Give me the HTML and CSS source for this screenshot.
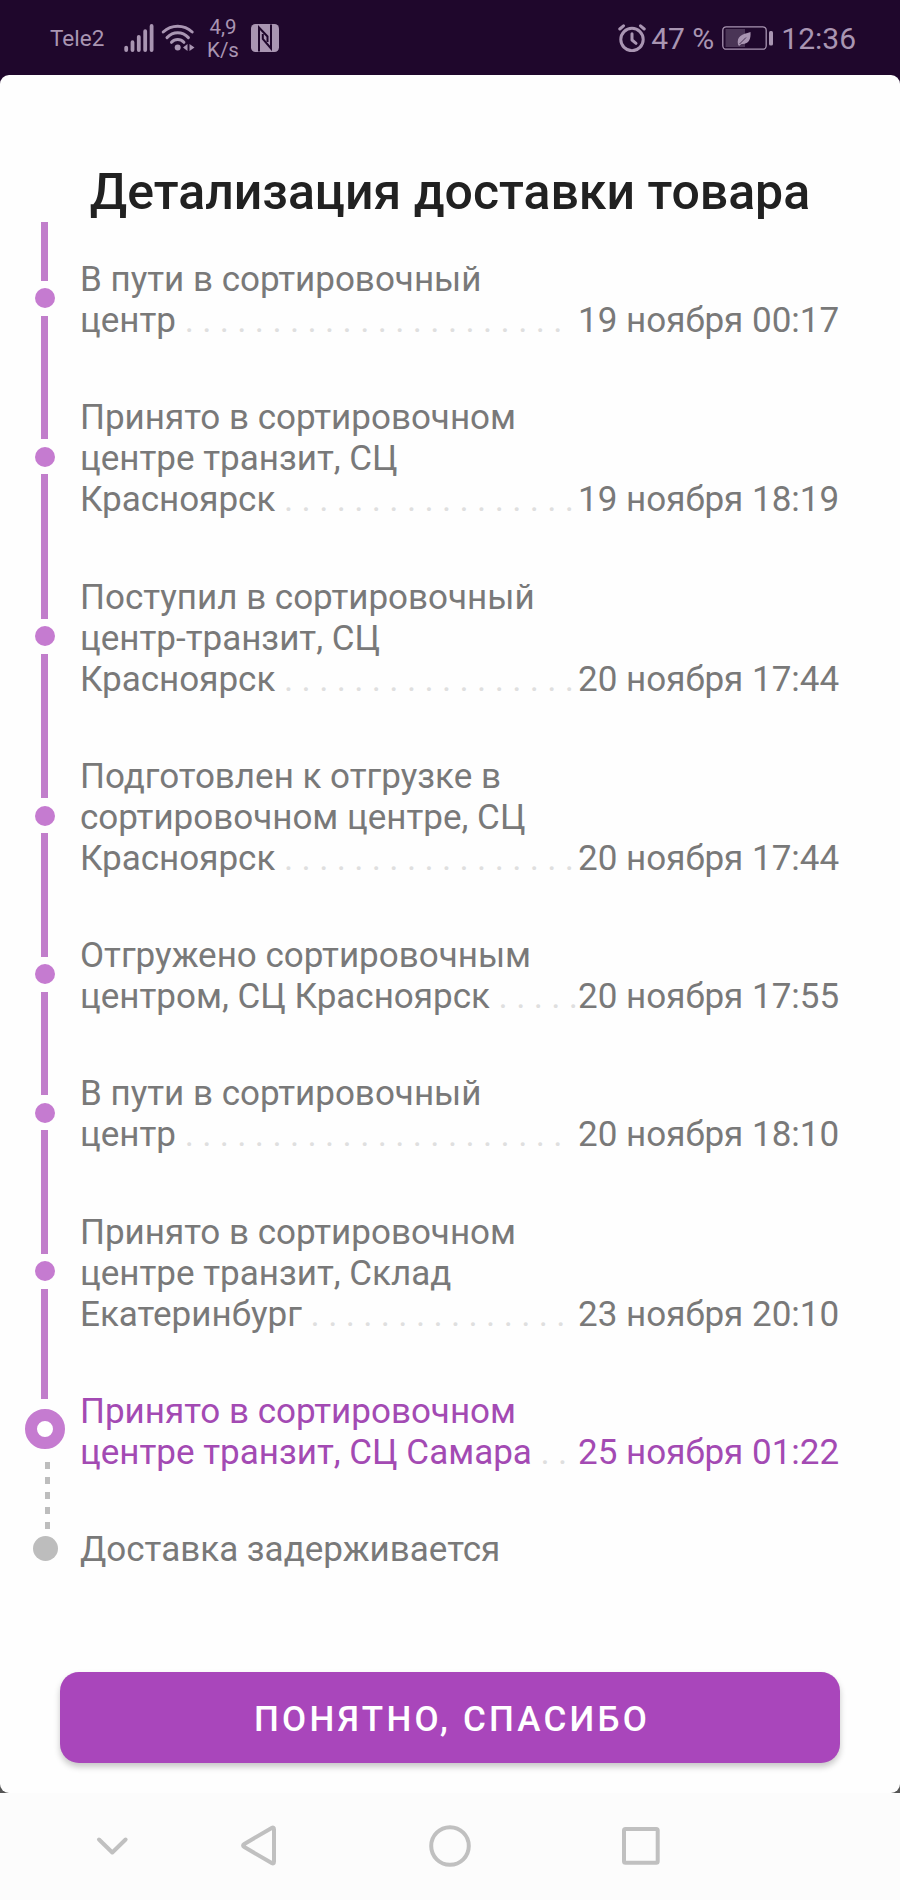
FILE: index.html
```
<!DOCTYPE html>
<html lang="ru">
<head>
	<meta charset="utf-8">
	<title>Детализация доставки товара</title>
	<link rel="stylesheet" href="styles.css">
</head>
<body>
<header class="status">
	<span class="carrier">Tele2</span>
	<svg class="signal" width="30" height="28" viewBox="0 0 30 28">
		<g stroke="currentColor" stroke-width="3.8" stroke-linecap="round">
			<path d="M2.2 23.6V26M8.5 18.2V26M14.8 12.8V26M21.2 7.2V26M27.6 2V26"/>
		</g>
	</svg>
	<svg class="wifi" width="34" height="28" viewBox="0 0 34 28">
		<g fill="none" stroke="currentColor" stroke-width="3" stroke-linecap="round">
			<path d="M2.2 8C10.5 .3 22.9 .3 31.2 8"/>
			<path d="M6 13.6C12.2 7.2 21.2 7.2 27.4 13.6"/>
			<path d="M10.5 18.3C14 14.5 19.4 14.5 22.9 18.3"/>
		</g>
		<circle cx="16.7" cy="23.5" r="3" fill="currentColor"/>
		<path d="M26.5 20V27L22 23.5ZM28.5 20V27L33.5 23.5Z" fill="currentColor"/>
	</svg>
	<span class="speed">4,9<br>K/s</span>
	<svg class="nfc" width="28" height="28" viewBox="0 0 28 28">
		<rect width="28" height="28" rx="4.5" fill="currentColor"/>
		<g fill="none" stroke="#1f072c" stroke-width="2">
			<path d="M8 27.5V3.5L16.5 12.5V18"/>
			<path d="M20 .5V24.5L11.8 15V10"/>
		</g>
	</svg>
	<svg class="alarm" width="28" height="28" viewBox="0 0 28 28">
		<g fill="none" stroke="currentColor" stroke-width="3" stroke-linecap="round">
			<circle cx="14" cy="15.5" r="11.2"/>
			<path d="M14 9.8V16L18 19.3" stroke-linejoin="round"/>
			<path d="M1.8 5L5.5 1.8M26.2 5L22.5 1.8"/>
		</g>
	</svg>
	<span class="percent">47 %</span>
	<svg class="battery" width="51" height="24" viewBox="0 0 51 24">
		<rect x=".8" y=".8" width="43.4" height="22.4" rx="3.5" fill="none" stroke="currentColor" stroke-width="1.3"/>
		<rect x="3.5" y="3" width="19.5" height="18" fill="#4a3556"/>
		<rect x="47" y="5" width="4" height="14.5" rx="1.5" fill="currentColor"/>
		<path d="M28.500 6C29 13 27 18.500 19.500 18L17 20 16 18.500C14.500 10 20 8.500 28.500 6Z" fill="currentColor"/>
		<path d="M17.500 18L24 11.500" stroke="#4a3556"/>
	</svg>
	<span class="clock">12:36</span>
</header>

<div class="backdrop">
	<main class="sheet">
		<h1>Детализация доставки товара</h1>
		<ul class="steps">
			<li class="step">
				<div class="rail"><i class="line"></i><i class="dot"></i><i class="line"></i></div>
				<div class="name">В пути в сортировочный<br>центр <span class="dots">. . . . . . . . . . . . . . . . . . . . . .</span></div>
				<time>19 ноября 00:17</time>
			</li>
			<li class="step">
				<div class="rail"><i class="line"></i><i class="dot"></i><i class="line"></i></div>
				<div class="name">Принято в сортировочном<br>центре транзит, СЦ<br>Красноярск <span class="dots">. . . . . . . . . . . . . . . . .</span></div>
				<time>19 ноября 18:19</time>
			</li>
			<li class="step">
				<div class="rail"><i class="line"></i><i class="dot"></i><i class="line"></i></div>
				<div class="name">Поступил в сортировочный<br>центр-транзит, СЦ<br>Красноярск <span class="dots">. . . . . . . . . . . . . . . . .</span></div>
				<time>20 ноября 17:44</time>
			</li>
			<li class="step">
				<div class="rail"><i class="line"></i><i class="dot"></i><i class="line"></i></div>
				<div class="name">Подготовлен к отгрузке в<br>сортировочном центре, СЦ<br>Красноярск <span class="dots">. . . . . . . . . . . . . . . . .</span></div>
				<time>20 ноября 17:44</time>
			</li>
			<li class="step">
				<div class="rail"><i class="line"></i><i class="dot"></i><i class="line"></i></div>
				<div class="name">Отгружено сортировочным<br>центром, СЦ Красноярск <span class="dots">. . . . .</span></div>
				<time>20 ноября 17:55</time>
			</li>
			<li class="step">
				<div class="rail"><i class="line"></i><i class="dot"></i><i class="line"></i></div>
				<div class="name">В пути в сортировочный<br>центр <span class="dots">. . . . . . . . . . . . . . . . . . . . . .</span></div>
				<time>20 ноября 18:10</time>
			</li>
			<li class="step">
				<div class="rail"><i class="line"></i><i class="dot"></i><i class="line"></i></div>
				<div class="name">Принято в сортировочном<br>центре транзит, Склад<br>Екатеринбург <span class="dots">. . . . . . . . . . . . . . .</span></div>
				<time>23 ноября 20:10</time>
			</li>
			<li class="step current">
				<div class="rail"><i class="line"></i><i class="dot"></i><i class="line dashed"></i></div>
				<div class="name">Принято в сортировочном<br>центре транзит, СЦ Самара <span class="dots">. .</span></div>
				<time>25 ноября 01:22</time>
			</li>
			<li class="step pending">
				<div class="rail"><i class="line dashed"></i><i class="dot"></i><i class="line"></i></div>
				<div class="name">Доставка задерживается</div>
			</li>
		</ul>
		<button class="ok" type="button">ПОНЯТНО, СПАСИБО</button>
	</main>
</div>

<nav class="navbar">
	<svg width="44" height="44" viewBox="0 0 44 44">
		<path d="M9 15.5L22.3 28.5L35.6 15.5"/>
	</svg>
	<svg width="44" height="44" viewBox="0 0 44 44">
		<path d="M37 5.4Q37 2.6 34.7 4L7.3 19.9Q4.8 21.5 7.3 23.1L34.7 39Q37 40.4 37 37.6Z"/>
	</svg>
	<svg width="44" height="44" viewBox="0 0 44 44">
		<circle cx="22" cy="22" r="18.8"/>
	</svg>
	<svg width="44" height="44" viewBox="0 0 44 44">
		<rect x="5" y="5" width="33.7" height="33.7" rx="1.5"/>
	</svg>
</nav>
</body>
</html>
```
FILE: styles.css
```
* {
	box-sizing: border-box;
}

body {
	margin: 0;
	width: 900px;
	height: 1900px;
	overflow: hidden;
	display: flex;
	flex-direction: column;
	background: #fcfcfc;
	font-family: Roboto, sans-serif;
	font-size: 35px;
	line-height: 41px;
	color: #797979;
}

/* status bar */
.status {
	height: 75px;
	padding: 0 44px 0 50px;
	display: flex;
	align-items: center;
	background: #1f072c;
	color: #a995b2;
	white-space: nowrap;
}

.carrier {
	width: 74px;
	padding-top: 1px;
	font-size: 22.5px;
}

.wifi {
	margin-left: 7px;
}

.speed {
	width: 34px;
	margin: 3px 11px 0 11px;
	font-size: 20.5px;
	line-height: 23.5px;
	text-align: center;
}

.nfc {
	margin-right: auto;
}

.percent,
.clock {
	font-size: 30px;
	padding-top: 2px;
}

.percent {
	margin: 0 8px 0 5px;
}

.clock {
	margin-left: 8px;
}

/* sheet */
.backdrop {
	height: 1717.7px;
	background: linear-gradient(#1f072c 50%, #555 50%);
}

.sheet {
	height: 100%;
	padding: 87px 60px 0 25px;
	border-radius: 9px;
	background: #fefefe;
}

h1 {
	margin: 0 -35px 0 0;
	font-size: 50px;
	font-weight: 500;
	line-height: 60px;
	text-align: center;
	white-space: nowrap;
	color: #212121;
}

.steps {
	margin: 0;
	padding: 0;
	list-style: none;
}

/* tail of the line scrolled out above the first step */
.steps::before {
	content: "";
	display: block;
	width: 7px;
	height: 7px;
	margin-left: 16px;
	background: #c17ecb;
}

.step {
	display: flex;
}

.rail {
	width: 40px;
	margin-right: 15px;
	display: flex;
	flex-direction: column;
	align-items: center;
	gap: 7.5px;
}

.line {
	flex: 1;
	width: 7px;
	margin-right: 1px;
	background: #c17ecb;
}

.dot {
	width: 20px;
	height: 20px;
	border-radius: 50%;
	background: #c57bd0;
}

.name {
	flex: 1;
	padding: 30px 0 26.3px;
	white-space: nowrap;
}

.dots {
	letter-spacing: -.18px;
	color: #dfdfdf;
}

time {
	width: 262px;
	padding-bottom: 26.3px;
	align-self: flex-end;
	white-space: nowrap;
}

.current {
	color: #a34ab3;
}

.current .rail {
	gap: 10px;
}

.current .dot {
	width: 40px;
	height: 40px;
	border: 12.3px solid #c57bd0;
	background: #fff;
}

.dashed {
	width: 5px;
	margin: 0 0 0 5px;
	background: repeating-linear-gradient(#bdbdbd 0 7px, transparent 7px 14.8px);
}

.current .dashed {
	margin-top: 3px;
}

.pending .rail {
	gap: 5px;
}

.pending .dashed {
	background: repeating-linear-gradient(transparent 0 7.7px, #bdbdbd 7.7px 14.8px);
}

.pending .dot {
	width: 25px;
	height: 25px;
	background: #bdbdbd;
}

.pending .line:last-child {
	visibility: hidden;
}

.ok {
	display: block;
	width: 780px;
	height: 91px;
	margin: 75px 0 0 35px;
	padding: 4px 0 0 4px;
	border: none;
	border-radius: 19px;
	background: #a946bb;
	box-shadow: 0 4px 6px rgba(0, 0, 0, .22);
	font: 500 35px Roboto, sans-serif;
	letter-spacing: 3.25px;
	color: #fff;
}

/* system navigation */
.navbar {
	flex: 1;
	padding-left: 90px;
	display: flex;
	align-items: center;
}

.navbar svg {
	margin-right: 147px;
	fill: none;
	stroke: #c0c0c0;
	stroke-width: 4;
	stroke-linecap: round;
	stroke-linejoin: round;
}

.navbar svg:first-child {
	margin-right: 103px;
}
```
